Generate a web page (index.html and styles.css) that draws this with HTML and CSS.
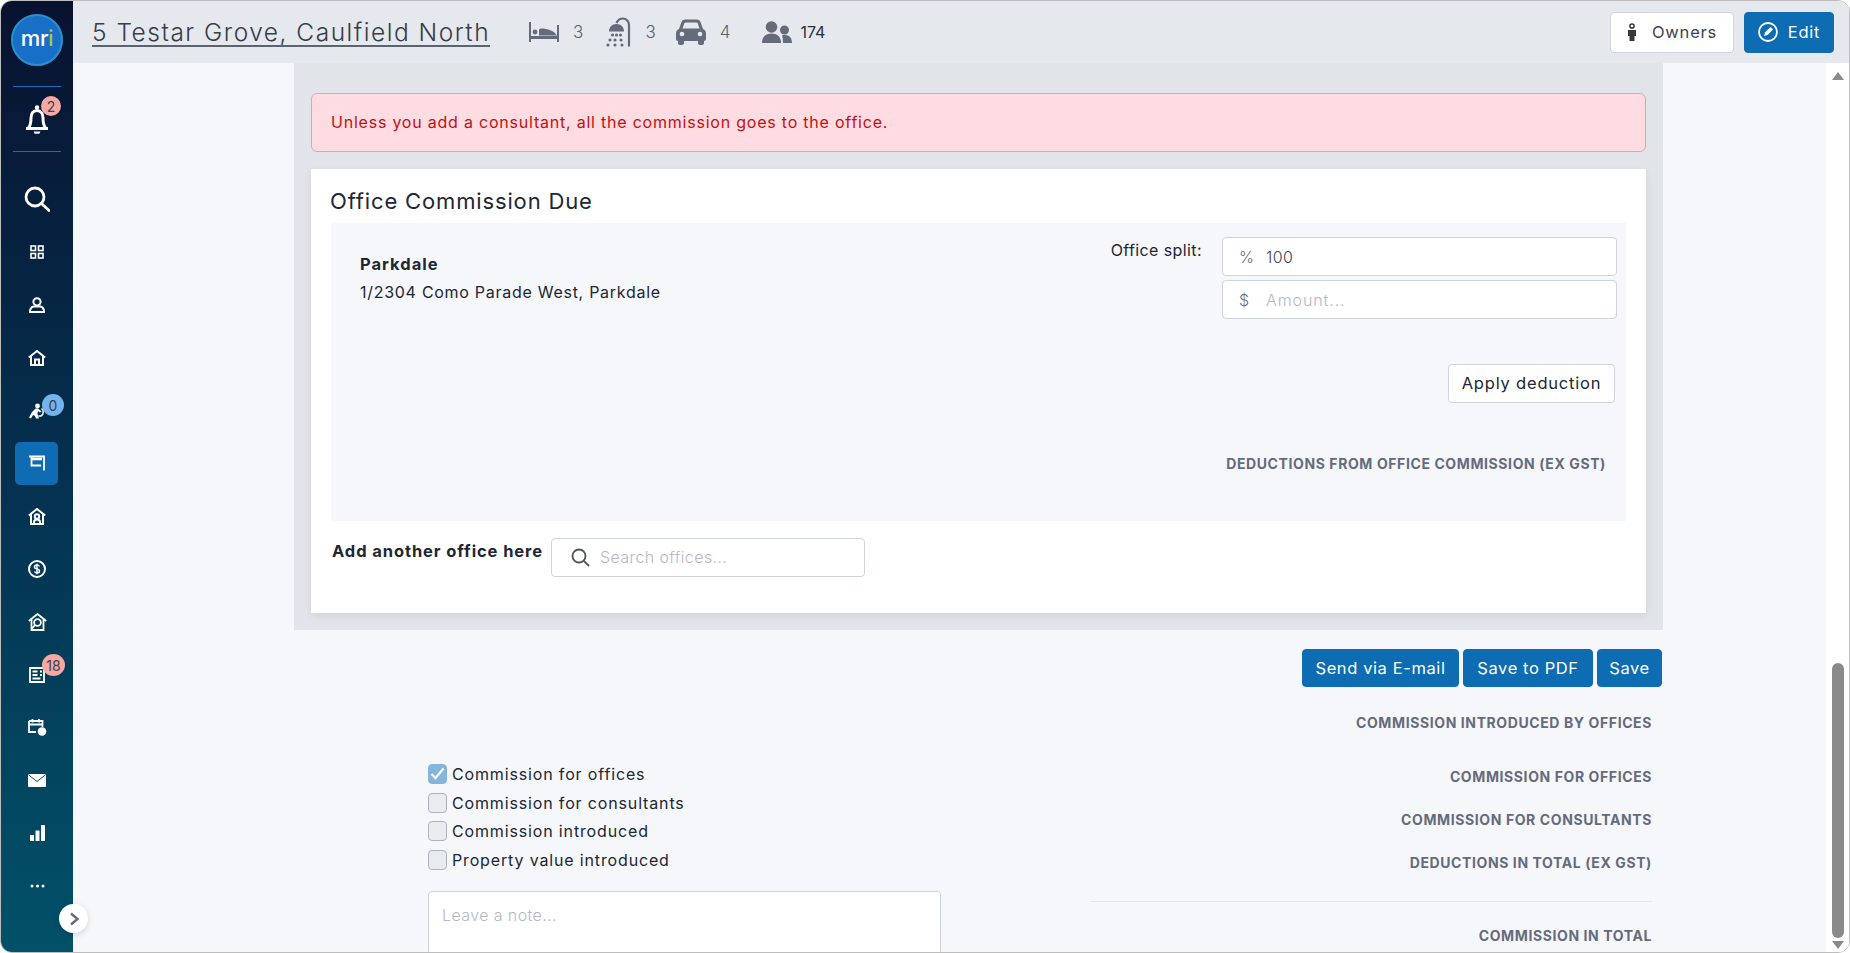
FILE: index.html
```html
<!DOCTYPE html>
<html lang="en">
<head>
    <meta charset="UTF-8">
    <title>5 Testar Grove, Caulfield North</title>
    <link rel="stylesheet" href="styles.css">
</head>
<body>
<div class="window">
    <aside class="sidebar">
        <div class="logo"><span>mr</span><span class="logo-i">i</span></div>
        <div class="bell-row">
            <svg width="24" height="30" viewBox="0 0 24 30" fill="none" stroke="#fff" stroke-width="3"><path d="M1 24.500h22M3.500 24c2-2.500 2.500-5 2.500-10 0-4.500 2.500-7.500 6-7.500s6 3 6 7.500c0 5 .5 7.500 2.500 10"/><circle cx="12" cy="3.500" r="2.200" fill="#fff" stroke="none"/><path d="M8.500 27.500h7l-1.200 2.200h-4.600z" fill="#fff" stroke="none"/></svg>
            <span class="badge badge-red bell-badge">2</span>
        </div>
        <nav class="nav">
            <a class="nav-item"><svg width="26" height="26" viewBox="0 0 26 26" fill="none" stroke="#fff" stroke-width="2.800"><circle cx="11" cy="11" r="9"/><path d="M17.500 17.500 25 24.500" stroke-linecap="round"/></svg></a>
            <a class="nav-item"><svg width="14" height="14" viewBox="0 0 14 14" fill="none" stroke="#fff" stroke-width="1.600"><rect x="1" y="1" width="4.500" height="4.500"/><rect x="8.500" y="1" width="4.500" height="4.500"/><rect x="1" y="8.500" width="4.500" height="4.500"/><rect x="8.500" y="8.500" width="4.500" height="4.500"/></svg></a>
            <a class="nav-item"><svg width="16" height="16" viewBox="0 0 16 16" fill="none" stroke="#fff" stroke-width="2"><circle cx="8" cy="4.800" r="3.600"/><path d="M1 15c0-3 1.500-5 3.500-5.500h7c2 .5 3.500 2.500 3.500 5.500z"/></svg></a>
            <a class="nav-item"><svg width="18" height="16" viewBox="0 0 18 16" fill="none" stroke="#fff" stroke-width="2"><path d="M.8 7.500 9 1l8.200 6.500M3 6v9h12V6"/><path d="M7 15V9.500h4V15"/></svg></a>
            <a class="nav-item">
                <svg width="16" height="16" viewBox="0 0 16 16" fill="#fff"><circle cx="8.500" cy="3" r="2.400"/><path d="M6.500 5.500 3 9l-3 5.500 2 1L4 12l2 1 1 2.500h3L8.500 11 9 8l2 1.500 1.500-1L9 5.500z"/><path d="M12.500 5.500A4.500 4.500 0 0 1 12 13H9.500" fill="none" stroke="#fff" stroke-width="1.500"/></svg>
                <span class="badge badge-blue run-badge">0</span>
            </a>
            <a class="nav-item nav-active"><svg width="16" height="16" viewBox="0 0 16 16" fill="none" stroke="#fff" stroke-width="1.800"><path d="M0 1.500h16M15 1v14.500"/><path d="M2.500 2v8.500H12"/><path d="M2 4h11" stroke-width="2.600"/></svg></a>
            <a class="nav-item"><svg width="18" height="17" viewBox="0 0 18 17" fill="none" stroke="#fff" stroke-width="2"><path d="M.8 7.500 9 1l8.200 6.500M3 6v10h12V6"/><circle cx="9" cy="8.500" r="2.200"/><path d="M6 16v-2c0-1.500 1.200-2.500 3-2.500s3 1 3 2.500v2"/></svg></a>
            <a class="nav-item"><svg width="18" height="18" viewBox="0 0 18 18" fill="none" stroke="#fff" stroke-width="2"><circle cx="9" cy="9" r="8"/><path d="M11.500 6.500C11 5.500 10 5 9 5 7.500 5 6.500 5.800 6.500 7s1 1.700 2.500 2 2.500.8 2.500 2-1 2-2.500 2c-1 0-2-.5-2.500-1.500M9 3.800v10.400" stroke-width="1.500"/></svg></a>
            <a class="nav-item"><svg width="19" height="18" viewBox="0 0 19 18" fill="none" stroke="#fff" stroke-width="1.800"><path d="M.8 8 9.500 1l8.700 7M3.500 6.500V17h12V6.500"/><circle cx="9.500" cy="9.500" r="3.400"/><path d="M7 12 4 15.500"/></svg></a>
            <a class="nav-item">
                <svg width="17" height="16" viewBox="0 0 17 16" fill="none" stroke="#fff" stroke-width="1.800"><path d="M1 1h14v14H1zM3.500 4.500h5M3.500 8h5M3.500 11.500h8"/><path d="M11 4.500h2M11 8h2" stroke-width="2"/></svg>
                <span class="badge badge-red list-badge">18</span>
            </a>
            <a class="nav-item">
                <svg width="19" height="18" viewBox="0 0 19 18" fill="none" stroke="#fff" stroke-width="1.800"><path d="M1 3h13.500v6M8 14H1V3M1 6.500h13.500M4.500 1v3.500M11 1v3.500"/><circle cx="14" cy="13.500" r="4.300" fill="#fff" stroke="none"/></svg>
            </a>
            <a class="nav-item"><svg width="18" height="13" viewBox="0 0 18 13"><rect width="18" height="13" rx="1" fill="#fff"/><path d="M.5.800 9 7.500 17.500.8" fill="none" stroke="#16506c" stroke-width="1"/></svg></a>
            <a class="nav-item"><svg width="15" height="16" viewBox="0 0 15 16" fill="#fff"><rect y="10" width="4" height="6" rx=".5"/><rect x="5.500" y="5.500" width="4" height="10.500" rx=".5"/><rect x="11" y="0" width="4" height="16" rx=".5"/></svg></a>
            <a class="nav-item"><svg width="15" height="4" viewBox="0 0 15 4" fill="#fff"><circle cx="2" cy="2" r="1.500"/><circle cx="7.500" cy="2" r="1.500"/><circle cx="13" cy="2" r="1.500"/></svg></a>
        </nav>
    </aside>
    <button class="toggle"><svg width="11" height="14" viewBox="0 0 11 14" fill="none" stroke="#646b7b" stroke-width="2.400"><path d="M2 1.500 8.500 7 2 12.500"/></svg></button>

    <div class="main">
        <header class="topbar">
            <a class="address">5 Testar Grove, Caulfield North</a>
            <div class="stats">
                <div class="stat stat-bed">
                    <svg width="30" height="20" viewBox="0 0 30 20" fill="#646b7b"><path d="M0 0h2v20H0zM28 3h2v17h-2zM1 14h28v3H1z"/><circle cx="6" cy="10" r="2.400"/><path d="M10 13.500V8.500c0-1.500 1-2 2.500-2 6 0 12 2 15.500 7z"/></svg>
                    <span>3</span>
                </div>
                <div class="stat stat-shower">
                    <svg width="25" height="30" viewBox="0 0 25 30" fill="#646b7b"><path d="M23 29.500V8c0-3.500-2.500-6.500-6-6.500S11.500 3.500 10.500 6" fill="none" stroke="#646b7b" stroke-width="2.200"/><path d="M3 14.500C3 10 6 7 10.500 7s7.500 3 7.500 7.500z"/><g><circle cx="6.500" cy="18" r="1.600"/><circle cx="10.500" cy="18" r="1.600"/><circle cx="14.500" cy="18" r="1.600"/><circle cx="4" cy="23" r="1.600"/><circle cx="9" cy="23" r="1.600"/><circle cx="15" cy="23" r="1.600"/><circle cx="2" cy="28" r="1.600"/><circle cx="9" cy="28" r="1.600"/><circle cx="16" cy="28" r="1.600"/></g></svg>
                    <span>3</span>
                </div>
                <div class="stat stat-car">
                    <svg width="30" height="26" viewBox="0 0 30 26" fill="#646b7b"><path d="M3 10 5.500 3C6 1.500 7.500.5 9 .5h12c1.500 0 3 1 3.500 2.500L27 10c2 .8 3 2.500 3 4.500V20c0 1.200-.8 2-2 2v2c0 1-.8 2-2 2h-2c-1.200 0-2-1-2-2v-2H8v2c0 1-.8 2-2 2H4c-1.200 0-2-1-2-2v-2c-1.200 0-2-.8-2-2v-5.500C0 12.500 1 10.800 3 10z"/><path d="M6.500 9.500 8.200 4.500c.2-.6.700-1 1.300-1h11c.6 0 1.100.4 1.300 1l1.700 5z" fill="#e5e8ec"/><circle cx="6" cy="15" r="2.300" fill="#e5e8ec"/><circle cx="24" cy="15" r="2.300" fill="#e5e8ec"/></svg>
                    <span>4</span>
                </div>
                <div class="stat stat-people">
                    <svg width="30" height="22" viewBox="0 0 30 22" fill="#646b7b"><circle cx="9.500" cy="6" r="5.800"/><path d="M0 22c0-5.500 3-9.500 9.500-9.500S19 16.500 19 22z"/><circle cx="22.500" cy="9" r="4.500"/><path d="M20 14.500c1-.5 1.800-.5 3-.5 4.500 0 7 3 7 8h-9c0-3-.3-5.500-1-7.500z"/></svg>
                    <span class="stat-dark">174</span>
                </div>
            </div>
            <div class="top-actions">
                <button class="btn btn-white btn-owners">
                    <svg width="10" height="18" viewBox="0 0 10 18" fill="#33393f"><circle cx="5" cy="3" r="2.100" fill="none" stroke="#33393f" stroke-width="1.500"/><path d="M1 7h8v6H7.500v5h-5v-5H1z"/></svg>
                    Owners
                </button>
                <button class="btn btn-blue btn-edit">
                    <svg width="20" height="20" viewBox="0 0 20 20" fill="none" stroke="#fff" stroke-width="1.800"><circle cx="10" cy="10" r="9"/><path d="M6 14l1-3.500 5.500-5.500 2.500 2.500-5.500 5.500z" fill="#fff" stroke="none"/></svg>
                    Edit
                </button>
            </div>
        </header>

        <div class="body-row">
            <div class="scroll-area">
                <section class="panel">
                    <div class="alert">Unless you add a consultant, all the commission goes to the office.</div>
                    <div class="card">
                        <h3 class="card-title">Office Commission Due</h3>
                        <div class="office">
                            <div class="office-top">
                                <div class="office-info">
                                    <div class="office-name">Parkdale</div>
                                    <div class="office-addr">1/2304 Como Parade West, Parkdale</div>
                                </div>
                                <div class="split">
                                    <span class="split-label">Office split:</span>
                                    <div class="split-inputs">
                                        <div class="field"><span class="field-addon">%</span><span class="field-value">100</span></div>
                                        <div class="field"><span class="field-addon">$</span><span class="field-hint hint-amount">Amount...</span></div>
                                    </div>
                                </div>
                            </div>
                            <div class="apply-row"><button class="btn btn-white btn-apply">Apply deduction</button></div>
                            <div class="caps deductions">DEDUCTIONS FROM OFFICE COMMISSION (EX GST)</div>
                        </div>
                        <div class="add-office">
                            <span class="add-label">Add another office here</span>
                            <div class="field search-field">
                                <svg width="19" height="19" viewBox="0 0 19 19" fill="none" stroke="#4b5563" stroke-width="1.800"><circle cx="8" cy="8" r="6.500"/><path d="M12.500 12.500 18 18"/></svg>
                                <span class="field-hint search-hint">Search offices...</span>
                            </div>
                        </div>
                    </div>
                </section>

                <div class="toolbar">
                    <button class="btn btn-blue btn-send">Send via E-mail</button>
                    <button class="btn btn-blue btn-pdf">Save to PDF</button>
                    <button class="btn btn-blue btn-save">Save</button>
                </div>

                <div class="summary">
                    <div class="summary-left">
                        <label class="check"><span class="box box-on"><svg width="15" height="13" viewBox="0 0 15 13" fill="none" stroke="#fff" stroke-width="2.200"><path d="M1.500 7 5.500 11 13.500 1.500"/></svg></span>Commission for offices</label>
                        <label class="check"><span class="box"></span>Commission for consultants</label>
                        <label class="check"><span class="box"></span>Commission introduced</label>
                        <label class="check"><span class="box"></span>Property value introduced</label>
                        <div class="note"><span class="field-hint">Leave a note...</span></div>
                    </div>
                    <div class="summary-right">
                        <div class="caps sum-intro">COMMISSION INTRODUCED BY OFFICES</div>
                        <div class="caps sum-offices">COMMISSION FOR OFFICES</div>
                        <div class="caps sum-next">COMMISSION FOR CONSULTANTS</div>
                        <div class="caps sum-next">DEDUCTIONS IN TOTAL (EX GST)</div>
                        <hr class="sum-line">
                        <div class="caps">COMMISSION IN TOTAL</div>
                    </div>
                </div>
            </div>
            <div class="scrollbar">
                <span class="arrow-up"></span>
                <span class="thumb"></span>
                <span class="arrow-down"></span>
            </div>
        </div>
    </div>
</div>
</body>
</html>
```

FILE: styles.css
```css
* {
    box-sizing: border-box;
}
html, body {
    margin: 0;
    height: 100%;
    overflow: hidden;
    background: #fff;
}
body {
    font-family: "Inter", "Open Sans", sans-serif;
    color: #212633;
    font-size: 16px;
}
.window {
    position: relative;
    display: flex;
    height: 953px;
    border: 1px solid #bdbdbd;
    border-radius: 12px;
    overflow: hidden;
}

/* Sidebar */
.sidebar {
    flex: 0 0 72px;
    display: flex;
    flex-direction: column;
    align-items: center;
    padding-top: 13px;
    background: linear-gradient(180deg, #08122f 0%, #04314f 50%, #025169 100%);
}
.logo {
    display: flex;
    align-items: center;
    justify-content: center;
    width: 52px;
    height: 52px;
    border-radius: 50%;
    background: #176fc6;
    border: 2px solid #2c8fd0;
    color: #fff;
    font-size: 22px;
    font-weight: 500;
    letter-spacing: -0.3px;
    padding-bottom: 4px;
}
.logo-i {
    color: #9ccc3c;
}
.bell-row {
    position: relative;
    display: flex;
    align-items: center;
    justify-content: center;
    width: 48px;
    height: 66px;
    margin-top: 20px;
    border-top: 1px solid #1271b8;
    border-bottom: 1px solid #1271b8;
}
.badge {
    position: absolute;
    display: flex;
    align-items: center;
    justify-content: center;
    border-radius: 50%;
    color: #3b4252;
    font-size: 14px;
}
.badge-red {
    background: #f6a8a2;
}
.badge-blue {
    background: #74b3ec;
}
.bell-badge {
    top: 9px;
    left: 28px;
    width: 20px;
    height: 20px;
}
.run-badge {
    top: 10px;
    left: 41px;
    width: 22px;
    height: 22px;
}
.list-badge {
    top: 6px;
    left: 41px;
    width: 23px;
    height: 22px;
}
.nav {
    display: flex;
    flex-direction: column;
    align-items: center;
    width: 100%;
    margin-top: 21px;
}
.nav-item {
    position: relative;
    display: flex;
    align-items: center;
    justify-content: center;
    width: 100%;
    height: 52.8px;
}
.nav-active::before {
    content: "";
    position: absolute;
    top: 5px;
    left: 14px;
    width: 43px;
    height: 43px;
    border-radius: 5px;
    background: #0f6cb2;
}
.nav-active svg {
    position: relative;
}
.toggle {
    position: absolute;
    left: 58px;
    top: 903px;
    z-index: 5;
    display: flex;
    align-items: center;
    justify-content: center;
    width: 29px;
    height: 29px;
    padding: 0 0 0 2px;
    border: none;
    border-radius: 50%;
    background: #fff;
    box-shadow: 0 2px 6px rgba(0, 0, 0, 0.15);
}

/* Top bar */
.main {
    flex: 1;
    display: flex;
    flex-direction: column;
    min-width: 0;
}
.topbar {
    flex: 0 0 62px;
    display: flex;
    align-items: center;
    padding: 0 15px 0 19px;
    background: #e5e8ec;
}
.address {
    font-size: 24.5px;
    font-weight: 300;
    color: #363c4a;
    letter-spacing: 1.5px;
    text-decoration: underline;
    text-decoration-color: #5b6270;
    text-decoration-thickness: 2px;
    text-underline-offset: 4px;
}
.stats {
    display: flex;
    align-items: center;
    margin-left: 39px;
}
.stat {
    display: flex;
    align-items: center;
    font-size: 17px;
    font-weight: 300;
    color: #5b6270;
}
.stat-bed span {
    margin-left: 14px;
}
.stat-shower {
    margin-left: 23px;
}
.stat-shower span {
    margin-left: 14px;
}
.stat-car {
    margin-left: 20px;
}
.stat-car span {
    margin-left: 14px;
}
.stat-people {
    margin-left: 32px;
}
.stat-people span {
    margin-left: 8px;
}
.stat-dark {
    color: #2b3140;
    font-size: 16px;
    font-weight: 400;
}
.top-actions {
    display: flex;
    gap: 10px;
    margin-left: auto;
}
.btn {
    display: flex;
    align-items: center;
    justify-content: center;
    height: 38px;
    padding: 0;
    border-radius: 4px;
    font-family: inherit;
    font-size: 16.5px;
    letter-spacing: 0.8px;
}
.btn-white {
    background: #fff;
    border: 1px solid #cfd3da;
    color: #212633;
}
.btn-blue {
    background: #0e6cb2;
    border: 1px solid #0e6cb2;
    color: #fff;
}
.btn-owners {
    width: 124px;
    height: 41px;
    gap: 15px;
    color: #3b4252;
}
.btn-edit {
    width: 90px;
    height: 41px;
    gap: 10px;
}
.btn-apply {
    width: 167px;
    height: 39px;
    padding-bottom: 2px;
}
.btn-send {
    width: 157px;
}
.btn-pdf {
    width: 130px;
}
.btn-save {
    width: 65px;
}

/* Scrolling content */
.body-row {
    flex: 1;
    display: flex;
    min-height: 0;
}
.scroll-area {
    flex: 1;
    overflow: hidden;
    background: #f5f7fb;
    padding-left: 221px;
}
.scrollbar {
    flex: 0 0 23px;
    display: flex;
    flex-direction: column;
    align-items: center;
    background: #fff;
    padding: 9px 0 0 0;
}
.arrow-up {
    width: 0;
    height: 0;
    border: 6px solid transparent;
    border-top: none;
    border-bottom: 8px solid #8a8a8a;
}
.thumb {
    width: 12px;
    height: 275px;
    margin-top: 583px;
    border-radius: 6px;
    background: #8a8a8a;
}
.arrow-down {
    width: 0;
    height: 0;
    margin-top: 3px;
    border: 6px solid transparent;
    border-bottom: none;
    border-top: 8px solid #8a8a8a;
}
.panel {
    width: 1369px;
    padding: 30px 17px 17px;
    background: #e1e4e8;
}
.alert {
    display: flex;
    align-items: center;
    height: 59px;
    padding: 0 0 2px 19px;
    border: 1px solid #f49ab0;
    border-radius: 6px;
    background: #ffdce1;
    color: #bf1111;
    letter-spacing: 0.78px;
}
.card {
    height: 444px;
    margin-top: 17px;
    padding: 0 20px;
    background: #fff;
    box-shadow: 0 3px 8px rgba(0, 0, 0, 0.07);
}
.card-title {
    margin: 0 0 0 -1px;
    height: 54px;
    padding-top: 18px;
    font-size: 22px;
    font-weight: 400;
    letter-spacing: 0.85px;
    line-height: 28px;
}
.office {
    height: 298px;
    padding: 14px 9px 0 29px;
    background: #f5f7fb;
}
.office-top {
    display: flex;
    justify-content: space-between;
}
.office-info {
    padding-top: 16px;
}
.office-name {
    font-size: 16.5px;
    font-weight: 700;
    line-height: 22px;
    letter-spacing: 1px;
}
.office-addr {
    margin-top: 6px;
    line-height: 22px;
    letter-spacing: 0.72px;
}
.split {
    display: flex;
    gap: 20px;
}
.split-label {
    padding-top: 1px;
    line-height: 24px;
    letter-spacing: 0.4px;
}
.split-inputs {
    display: flex;
    flex-direction: column;
    gap: 4px;
    width: 395px;
}
.field {
    display: flex;
    align-items: center;
    height: 39px;
    padding-left: 16px;
    border: 1px solid #cfd3da;
    border-radius: 4px;
    background: #fff;
}
.field-addon {
    width: 27px;
    color: #646b7b;
    font-weight: 300;
}
.field-value {
    color: #3b4252;
    font-weight: 300;
    letter-spacing: 0.4px;
}
.field-hint {
    color: #b5b8be;
    font-weight: 300;
    letter-spacing: 0.4px;
}
.hint-amount {
    letter-spacing: 0.9px;
}
.search-hint {
    margin-bottom: 2px;
}
.apply-row {
    display: flex;
    justify-content: flex-end;
    margin-top: 45px;
    padding-right: 2px;
}
.caps {
    color: #646b7b;
    font-size: 14px;
    font-weight: 700;
    line-height: 20px;
    letter-spacing: 0.6px;
    text-align: right;
}
.deductions {
    margin-top: 51px;
    padding-right: 11px;
}
.add-office {
    display: flex;
    align-items: flex-start;
    margin-top: 17px;
}
.add-label {
    width: 220px;
    padding: 3px 0 0 1px;
    font-size: 16.5px;
    font-weight: 700;
    line-height: 20px;
    letter-spacing: 0.9px;
}
.search-field {
    width: 314px;
    gap: 10px;
    padding-left: 19px;
}

/* Bottom of the form */
.toolbar {
    display: flex;
    justify-content: flex-end;
    gap: 4px;
    width: 1368px;
    margin-top: 19px;
}
.btn-send, .btn-pdf, .btn-save {
    letter-spacing: 0.6px;
}
.summary {
    display: flex;
    width: 1369px;
}
.summary-left {
    width: 513px;
    margin-left: 134px;
    padding-top: 72.500px;
}
.check {
    display: flex;
    align-items: center;
    gap: 5px;
    height: 28.7px;
    letter-spacing: 0.85px;
}
.box {
    display: flex;
    align-items: center;
    justify-content: center;
    width: 19px;
    height: 20px;
    border: 1px solid #adb3bd;
    border-radius: 4px;
    background: #e9ecef;
}
.box-on {
    border-color: #86b5dc;
    background: #86b5dc;
}
.note {
    height: 120px;
    margin-top: 16.500px;
    padding: 13px;
    border: 1px solid #cfd3da;
    border-radius: 4px;
    background: #fff;
}
.summary-right {
    width: 561px;
    margin-left: 150px;
    padding-top: 26px;
}
.sum-offices {
    margin-top: 34px;
}
.sum-next {
    margin-top: 23px;
}
.sum-line {
    margin: 28px 0 24px;
    border: none;
    border-top: 1px solid #e1e4e8;
}
```
